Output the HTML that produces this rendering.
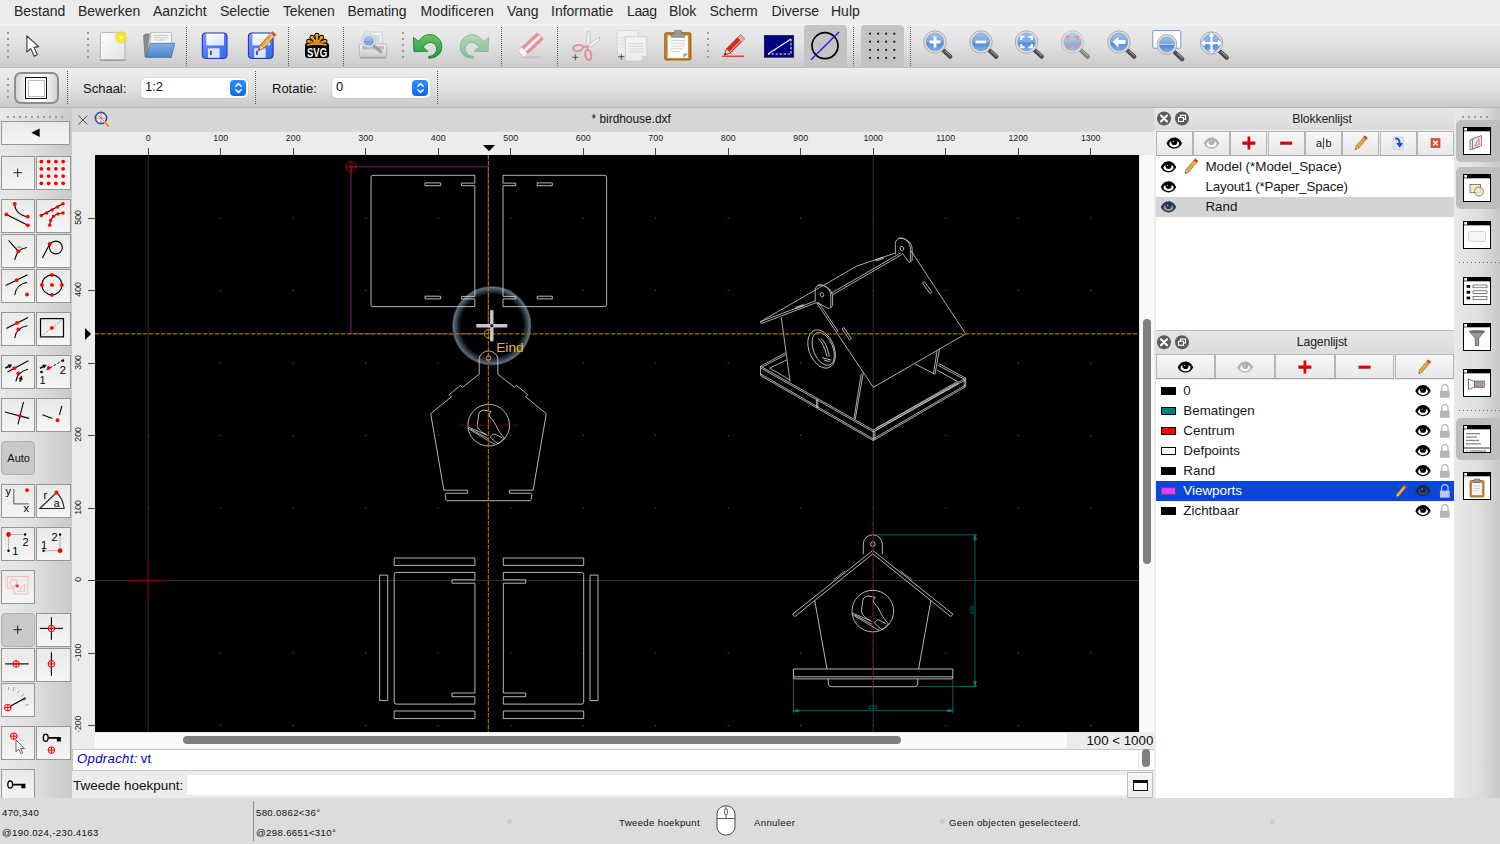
<!DOCTYPE html>
<html lang="nl"><head><meta charset="utf-8"><title>* birdhouse.dxf</title>
<style>
*{box-sizing:border-box;margin:0;padding:0}
html,body{width:1500px;height:844px;overflow:hidden;background:#ececec;font-family:"Liberation Sans",sans-serif;color:#1c1c1c}
.a{position:absolute}
.t{position:absolute;white-space:nowrap;line-height:1}
#menubar{left:0;top:0;width:1500px;height:24px;background:#ececec}
#menubar span{position:absolute;top:3px;font-size:14px;line-height:16px;color:#262626;white-space:nowrap}
#tb1{left:0;top:24px;width:1500px;height:44px;background:linear-gradient(#ededed,#e3e3e3 40%,#cdcdcd 96%,#c8c8c8);border-top:1px solid #f4f4f4;border-bottom:1px solid #bebebe}
#tb2{left:0;top:68px;width:1500px;height:40px;background:linear-gradient(#ededed,#e3e3e3 45%,#cdcdcd 94%,#c6c6c6);border-bottom:1px solid #b9b9b9}
.hdl{position:absolute;width:2px;background:repeating-linear-gradient(#9c9c9c 0 2px,transparent 2px 6px)}
.sep{position:absolute;width:1px;background:repeating-linear-gradient(#5a5a5a 0 1px,transparent 1px 2px)}
.chk{position:absolute;background:#c4c4c4;border-radius:4px}
.ico{position:absolute;width:32px;height:32px;overflow:visible}
#left{left:0;top:108px;width:72px;height:690px;background:linear-gradient(90deg,#e9e9e9,#dedede 50%,#c9c9c9)}
.lb{position:absolute;width:34.300px;height:34.200px;background:linear-gradient(#e9e9e9,#f5f5f5);border:1px solid #969696}
.lb svg{position:absolute;left:-1px;top:-1px;width:34px;height:34px;overflow:visible}
#tabbar{left:72px;top:108px;width:1082px;height:23.600px;background:#d6d6d6}
#hruler{left:72px;top:131px;width:1082px;height:24px;background:linear-gradient(#dbdbdb 0,#dbdbdb 1px,#ececec 1px)}
#vruler{left:72px;top:155px;width:23px;height:577px;background:#ececec;overflow:hidden}
#canvas{left:95px;top:155px;width:1044px;height:577px;background:#000;overflow:hidden}
.rl{position:absolute;font-size:8.8px;color:#1a1a1a;line-height:1;white-space:nowrap}
#status{left:0;top:798px;width:1500px;height:46px;background:#dcdcdc}
#status .t{font-size:9.6px;color:#111;letter-spacing:.35px}
#right{left:1154px;top:108px;width:300px;height:690px;background:#ececec}
#ricons{left:1454px;top:108px;width:46px;height:690px;background:linear-gradient(90deg,#e9e9e9,#dedede 55%,#c8c8c8)}
.dockt{position:absolute;left:0;width:300px;height:22px;background:linear-gradient(#e6e6e6,#dcdcdc);font-size:12.2px;letter-spacing:-.12px;text-align:center;line-height:22px;color:#222}
.dbtn{position:absolute;height:24px;background:linear-gradient(#f7f7f7,#e8e8e8);border:1px solid #b5b5b5;border-bottom-color:#a5a5a5}
.dbtn svg{position:absolute;left:50%;top:50%;overflow:visible}
.list{position:absolute;left:2px;width:298.500px;background:#fff}
.row{position:absolute;left:0;width:298.500px;height:20px;font-size:13.4px;line-height:20px;color:#161616;white-space:nowrap}
.row .nm{position:absolute;top:0}
.sw{position:absolute;left:5px;top:6px;width:15px;height:8px;border:1px solid #000}
</style></head><body>
<div id="menubar" class="a">
<span style="left:14px">Bestand</span><span style="left:78px">Bewerken</span><span style="left:153px">Aanzicht</span><span style="left:220px">Selectie</span><span style="left:283px;letter-spacing:-.2px">Tekenen</span><span style="left:347.5px">Bemating</span><span style="left:420.5px;letter-spacing:.1px">Modificeren</span><span style="left:507px">Vang</span><span style="left:551px">Informatie</span><span style="left:627px;letter-spacing:-.4px">Laag</span><span style="left:669px">Blok</span><span style="left:709.5px">Scherm</span><span style="left:771.5px">Diverse</span><span style="left:831px">Hulp</span>
</div>
<div id="tb1" class="a">
<i class="hdl" style="left:7px;top:7px;height:26px"></i>
<i class="hdl" style="left:87px;top:7px;height:26px"></i>
<i class="sep" style="left:186px;top:2px;height:40px"></i>
<i class="sep" style="left:288px;top:2px;height:40px"></i>
<i class="sep" style="left:343px;top:2px;height:40px"></i>
<i class="hdl" style="left:402px;top:7px;height:26px"></i>
<i class="sep" style="left:501px;top:2px;height:40px"></i>
<i class="sep" style="left:557px;top:2px;height:40px"></i>
<i class="hdl" style="left:707px;top:7px;height:26px"></i>
<i class="sep" style="left:853px;top:2px;height:40px"></i>
<i class="sep" style="left:910px;top:2px;height:40px"></i>
<div class="chk" style="left:804px;top:0px;width:43px;height:43px"></div>
<div class="chk" style="left:861px;top:0px;width:43px;height:43px"></div>
<svg class="a" style="left:0;top:-1px;pointer-events:none" width="1500" height="44" viewBox="0 24 1500 44">
<defs>
<radialGradient id="glow"><stop offset="0" stop-color="#fffff0"/><stop offset=".35" stop-color="#f4ec2a"/><stop offset=".75" stop-color="#efe01a" stop-opacity=".75"/><stop offset="1" stop-color="#efe01a" stop-opacity="0"/></radialGradient>
<linearGradient id="pg" x1="0" y1="0" x2="1" y2="1"><stop offset="0" stop-color="#fdfdfd"/><stop offset="1" stop-color="#e4e4e4"/></linearGradient>
<linearGradient id="fold" x1="0" y1="0" x2="0" y2="1"><stop offset="0" stop-color="#7fb0e4"/><stop offset="1" stop-color="#4d86c6"/></linearGradient>
<linearGradient id="flop" x1="0" y1="0" x2="1" y2="1"><stop offset="0" stop-color="#7a9cff"/><stop offset=".5" stop-color="#4a7dff"/><stop offset="1" stop-color="#2f6df2"/></linearGradient>
<linearGradient id="lab" x1="0" y1="0" x2="1" y2="1"><stop offset="0" stop-color="#ffffff"/><stop offset="1" stop-color="#d7e0fa"/></linearGradient>
<linearGradient id="grn" x1="0" y1="0" x2="0" y2="1"><stop offset="0" stop-color="#6cc46a"/><stop offset="1" stop-color="#1f9a3a"/></linearGradient>
<linearGradient id="lens" x1="0" y1="0" x2="0" y2="1"><stop offset="0" stop-color="#9cc0ee"/><stop offset=".52" stop-color="#74a6e4"/><stop offset=".54" stop-color="#4c86d6"/><stop offset="1" stop-color="#7fb0ea"/></linearGradient>
<linearGradient id="pr" x1="0" y1="0" x2="0" y2="1"><stop offset="0" stop-color="#f4f4f4"/><stop offset="1" stop-color="#c9c9c9"/></linearGradient>
</defs>
<path d="M26.900 35.800V52L30.800 48.600L34.200 56.200L37.300 54.800L34 47.400L38.600 46.600Z" fill="#fff" stroke="#3a3a3a" stroke-width="1.100" stroke-linejoin="round"/>
<rect x="100" y="59" width="25.500" height="2" rx="1" fill="#000" opacity=".25"/>
<rect x="100.400" y="32.600" width="24.600" height="27" rx="1.200" fill="url(#pg)" stroke="#a8a8a8" stroke-width=".8"/>
<circle cx="121" cy="37.400" r="7" fill="url(#glow)"/>
<path d="M102.600 42.500h.8M102.600 50h.8" stroke="#bbb" stroke-width=".8"/>
<path d="M143.500 35.500l2 -1.500h5l1.500 1.500h18.500v21.500h-25.500Z" fill="#8a8a8a" stroke="#666" stroke-width=".6"/>
<path d="M149.500 33.500h21.800v20h-23.500Z" fill="#dcdcdc" stroke="#999" stroke-width=".5"/><path d="M151 32.600h20.500v20h-22.500Z" fill="#f6f6f6" stroke="#999" stroke-width=".5"/><path d="M153.500 35.500h15M153.500 37.800h15M153.500 40h12" stroke="#bbb" stroke-width=".8"/>
<path d="M150.700 43.300H174.700L171.300 57.400H146Z" fill="url(#fold)" stroke="#3d6fa8" stroke-width=".7" stroke-linejoin="round"/>
<rect x="202.3" y="33" width="24.700" height="25.400" rx="3" fill="url(#flop)" stroke="#2626a8" stroke-width="1"/><rect x="206.3" y="33.600" width="17.700" height="11.800" fill="url(#lab)"/><rect x="208.0" y="48.300" width="11.600" height="9.500" fill="#dfe3ee"/><rect x="210.0" y="50.800" width="1.700" height="4.200" fill="#1f3fd0"/>
<rect x="248.4" y="33" width="24.700" height="25.400" rx="3" fill="url(#flop)" stroke="#2626a8" stroke-width="1"/><rect x="252.4" y="33.600" width="17.700" height="11.800" fill="url(#lab)"/><rect x="254.1" y="48.300" width="11.600" height="9.500" fill="#dfe3ee"/><rect x="256.1" y="50.800" width="1.700" height="4.200" fill="#1f3fd0"/>
<g transform="translate(274.2,33.2) rotate(132.3)"><path d="M0 -2.3H17.644449665830653L23.644449665830653 0L17.644449665830653 2.3H0Z" fill="#f4a21c" stroke="#a85a00" stroke-width=".7" stroke-linejoin="round"/><path d="M17.644449665830653 -2.3L23.644449665830653 0L17.644449665830653 2.3Z" fill="#f1d7a8" stroke="#a85a00" stroke-width=".5"/><path d="M21.444449665830653 -0.8363636363636363L23.644449665830653 0L21.444449665830653 0.8363636363636363Z" fill="#222"/><path d="M1 -1.0999999999999999H17.144449665830653" stroke="#fff" stroke-opacity=".55" stroke-width="1.100"/><rect x="0" y="-2.3" width="2.600" height="4.6" fill="#e0523a"/><rect x="2.600" y="-2.3" width="1.200" height="4.6" fill="#ddd"/></g>
<g stroke-linecap="round"><path d="M316.8 44L308.7 41.3" stroke="#000" stroke-width="3.800"/><path d="M316.8 44L312 37.3" stroke="#000" stroke-width="3.800"/><path d="M316.8 44L316.8 35.3" stroke="#000" stroke-width="3.800"/><path d="M316.8 44L321.6 37.3" stroke="#000" stroke-width="3.800"/><path d="M316.8 44L324.9 41.3" stroke="#000" stroke-width="3.800"/><circle cx="308.7" cy="41.3" r="2.500" fill="#000"/><circle cx="312" cy="37.3" r="2.500" fill="#000"/><circle cx="316.8" cy="35.3" r="2.500" fill="#000"/><circle cx="321.6" cy="37.3" r="2.500" fill="#000"/><circle cx="324.9" cy="41.3" r="2.500" fill="#000"/><path d="M316.8 44L308.7 41.3" stroke="#f7a41d" stroke-width="2"/><circle cx="308.7" cy="41.3" r="1.600" fill="#f7a41d"/><path d="M316.8 44L312 37.3" stroke="#f7a41d" stroke-width="2"/><circle cx="312" cy="37.3" r="1.600" fill="#f7a41d"/><path d="M316.8 44L316.8 35.3" stroke="#f7a41d" stroke-width="2"/><circle cx="316.8" cy="35.3" r="1.600" fill="#f7a41d"/><path d="M316.8 44L321.6 37.3" stroke="#f7a41d" stroke-width="2"/><circle cx="321.6" cy="37.3" r="1.600" fill="#f7a41d"/><path d="M316.8 44L324.9 41.3" stroke="#f7a41d" stroke-width="2"/><circle cx="324.9" cy="41.3" r="1.600" fill="#f7a41d"/></g>
<rect x="305" y="42.800" width="24" height="15.300" rx="3" fill="#000"/><path d="M307 45Q316.800 42.800 326.600 45" stroke="#f7a41d" stroke-width="1.700" fill="none"/>
<text x="317" y="56.700" font-size="12.800" font-weight="bold" fill="#fff" text-anchor="middle" textLength="20" lengthAdjust="spacingAndGlyphs" font-family="Liberation Sans,sans-serif">SVG</text>
<rect x="364" y="32" width="18" height="14" fill="#f2f2f2" stroke="#bdbdbd" stroke-width=".6"/><rect x="372" y="35" width="8" height="8" fill="#dcdcdc"/>
<rect x="359.300" y="44" width="27.400" height="13.300" rx="2" fill="url(#pr)" stroke="#a9a9a9" stroke-width=".7"/><rect x="362" y="46" width="22" height="3.500" fill="#8f8f8f" opacity=".5"/><rect x="360" y="57.300" width="26" height="1.500" rx=".7" fill="#000" opacity=".2"/>
<path d="M372.500 44.800L380.700 51.600" stroke="#9a9a9a" stroke-width="3" stroke-linecap="round"/><circle cx="368.700" cy="40.700" r="6" fill="url(#lens)" fill-opacity=".8" stroke="#e9e9e9" stroke-width="1.600"/><circle cx="368.700" cy="40.700" r="6.900" fill="none" stroke="#a4a4a4" stroke-width=".5"/>
<g transform="translate(427.8,0)" opacity="1"><path d="M-14.400 37.400L-13.800 51.600L0 51.200L-4.600 47.600C-3 43.500 1.500 41.600 5 43C9 44.800 10 49.500 7.500 53C5.800 55.200 3.500 56.200 0.800 56.400L1 58.200C6 58.200 10.500 56.200 12.800 52C15.500 46.500 13.500 39.500 8 36.200C2 32.800 -5.500 35 -9 41.500Z" fill="url(#grn)" stroke="#14802c" stroke-width=".9" stroke-linejoin="round"/></g>
<g transform="translate(474.2,0) scale(-1,1)" opacity="0.42"><path d="M-14.400 37.400L-13.800 51.600L0 51.200L-4.600 47.600C-3 43.500 1.500 41.600 5 43C9 44.800 10 49.500 7.500 53C5.800 55.200 3.500 56.200 0.800 56.400L1 58.200C6 58.200 10.500 56.200 12.800 52C15.500 46.500 13.500 39.500 8 36.200C2 32.800 -5.500 35 -9 41.500Z" fill="url(#grn)" stroke="#14802c" stroke-width=".9" stroke-linejoin="round"/></g>
<ellipse cx="531.500" cy="57.300" rx="11" ry="1.500" fill="#000" opacity=".07"/>
<g transform="translate(521,54) rotate(-43)" opacity=".85"><rect x="0" y="-4.500" width="26.400" height="9" rx="1" fill="#e3868c" stroke="#d1757b" stroke-width=".5"/><rect x="0" y="-4.500" width="5" height="9" fill="#fbfbfb" stroke="#ccc" stroke-width=".4"/><rect x="5" y="-1.500" width="21" height="3" fill="#fbeff0"/></g>
<g opacity=".85"><path d="M586 46L587.300 31.500L589.800 31L590.200 45.500Z" fill="#f4f4f4" stroke="#a4a4a4" stroke-width=".6"/><path d="M588.500 44.500L599.400 37.200L599.800 40.200L589.800 47.500Z" fill="#f4f4f4" stroke="#a4a4a4" stroke-width=".6"/>
<ellipse cx="578" cy="48" rx="5" ry="3" transform="rotate(-12 578 48)" fill="none" stroke="#e3838a" stroke-width="2"/><ellipse cx="588.300" cy="55" rx="3" ry="5" transform="rotate(-10 588.300 55)" fill="none" stroke="#e3838a" stroke-width="2"/><path d="M582.500 47L587.500 46.500L587.800 50.500" fill="none" stroke="#e3838a" stroke-width="2"/></g>
<path d="M572.300 57.300h6M575.300 54.300v6" stroke="#444" stroke-width=".9"/>
<g opacity=".75"><rect x="617.300" y="30.400" width="20.700" height="25.600" rx="1" fill="#f3f3f3" stroke="#c4c4c4" stroke-width=".7"/><path d="M620.500 38h6M620.500 41h6M620.500 44h6M620.500 47h6" stroke="#ccc" stroke-width=".7"/><path d="M625.300 36.700H646.700V56.500L642 61H625.300Z" fill="#f6f6f6" stroke="#bdbdbd" stroke-width=".7"/><path d="M642 61V56.500H646.700Z" fill="#ddd" stroke="#bdbdbd" stroke-width=".5"/><path d="M629.500 43.500h13.500M629.500 46.200h13.500M629.500 49h13.500M629.500 51.800h13.500" stroke="#ccc" stroke-width=".8"/></g>
<path d="M618.300 56.700h6M621.300 53.700v6" stroke="#444" stroke-width=".9"/>
<rect x="664.700" y="32.700" width="26.300" height="27.300" rx="1.500" fill="#c47d1c" stroke="#8e570e" stroke-width=".8"/><rect x="667.800" y="35.600" width="20.200" height="22.400" fill="#fbfbfb" stroke="#d3d3d3" stroke-width=".4"/><path d="M683.500 58V53.500H688Z" fill="#9d9d9d"/><path d="M671 40.500h14M671 43.200h14M671 46h14M671 48.800h12M671 51.500h9" stroke="#c9c9c9" stroke-width=".8"/><path d="M671.300 37.300V33.500H674.500V30.400H681.500V33.500H684.700V37.300Z" fill="#9b9b8e" stroke="#6d6d63" stroke-width=".6"/>
<g transform="translate(742.5,36.8) rotate(134.8)"><path d="M0 -2.8H19.668073554515168L25.668073554515168 0L19.668073554515168 2.8H0Z" fill="#dc2a1e" stroke="#7e1208" stroke-width=".7" stroke-linejoin="round"/><path d="M19.668073554515168 -2.8L25.668073554515168 0L19.668073554515168 2.8Z" fill="#f1d7a8" stroke="#7e1208" stroke-width=".5"/><path d="M23.46807355451517 -1.018181818181818L25.668073554515168 0L23.46807355451517 1.018181818181818Z" fill="#222"/><path d="M1 -1.5999999999999999H19.168073554515168" stroke="#fff" stroke-opacity=".55" stroke-width="1.100"/><rect x="0" y="-2.8" width="2.600" height="5.6" fill="#f0b0a8"/><rect x="2.600" y="-2.8" width="1.200" height="5.6" fill="#ddd"/></g>
<path d="M722 56.200H744" stroke="#f00" stroke-width="1.100"/>
<rect x="764.400" y="35.600" width="29.200" height="21.600" fill="#000082" stroke="#1b1b4a" stroke-width=".9"/><path d="M768 54L791 39" stroke="#fff" stroke-width="1.100"/><path d="M791 39V54H768" stroke="#e8e8ff" stroke-width="1.100" stroke-dasharray="2.400 1.600" fill="none"/>
<circle cx="825" cy="45.700" r="13" fill="none" stroke="#000" stroke-width="1.700"/><path d="M811 59.700L839 32" stroke="#1414f0" stroke-width="1.200"/>
<path d="M869.2 33.6h1.700M869.2 41.7h1.700M869.2 49.8h1.700M869.2 57.9h1.700M877.3 33.6h1.700M877.3 41.7h1.700M877.3 49.8h1.700M877.3 57.9h1.700M885.4 33.6h1.700M885.4 41.7h1.700M885.4 49.8h1.700M885.4 57.9h1.700M893.5 33.6h1.700M893.5 41.7h1.700M893.5 49.8h1.700M893.5 57.9h1.700" stroke="#000" stroke-width="1.700"/>
<g opacity="1"><path d="M943 50L950.2 56.6" stroke="#4c4c4c" stroke-width="4.400" stroke-linecap="round"/><path d="M944.8 50.6L950.8 56" stroke="#b4b4b4" stroke-width="1"/><circle cx="935" cy="42" r="11.2" fill="#e2e2e2" stroke="#9a9a9a" stroke-width=".8"/><circle cx="935" cy="42" r="8.9" fill="url(#lens)" stroke="#5f8fcf" stroke-width=".5"/><path d="M929.500 42H940.500M935 36.500V47.500" stroke="#fff" stroke-width="2.800"/></g>
<g opacity="1"><path d="M989 50L996.2 56.6" stroke="#4c4c4c" stroke-width="4.400" stroke-linecap="round"/><path d="M990.8 50.6L996.8 56" stroke="#b4b4b4" stroke-width="1"/><circle cx="981" cy="42" r="11.2" fill="#e2e2e2" stroke="#9a9a9a" stroke-width=".8"/><circle cx="981" cy="42" r="8.9" fill="url(#lens)" stroke="#5f8fcf" stroke-width=".5"/><path d="M975.500 42H986.500" stroke="#fff" stroke-width="2.800"/></g>
<g opacity="1"><path d="M1034.5 50L1041.7 56.6" stroke="#4c4c4c" stroke-width="4.400" stroke-linecap="round"/><path d="M1036.3 50.6L1042.3 56" stroke="#b4b4b4" stroke-width="1"/><circle cx="1026.5" cy="42" r="11.2" fill="#e2e2e2" stroke="#9a9a9a" stroke-width=".8"/><circle cx="1026.5" cy="42" r="8.9" fill="url(#lens)" stroke="#5f8fcf" stroke-width=".5"/><path d="M1021.2 40.0V36.7H1024.5M1028.5 36.7H1031.8V40.0M1031.8 44.0V47.3H1028.5M1024.5 47.3H1021.2V44.0" fill="none" stroke="#fff" stroke-width="2.100"/></g>
<g opacity="0.6"><path d="M1080.5 50L1087.7 56.6" stroke="#4c4c4c" stroke-width="4.400" stroke-linecap="round"/><path d="M1082.3 50.6L1088.3 56" stroke="#b4b4b4" stroke-width="1"/><circle cx="1072.5" cy="42" r="11.2" fill="#e2e2e2" stroke="#9a9a9a" stroke-width=".8"/><circle cx="1072.5" cy="42" r="8.9" fill="url(#lens)" stroke="#5f8fcf" stroke-width=".5"/><path d="M1067.2 40.0V36.7H1070.5M1074.5 36.7H1077.8V40.0M1077.8 44.0V47.3H1074.5M1070.5 47.3H1067.2V44.0" fill="none" stroke="#f25a5a" stroke-width="2.100"/></g>
<g opacity="1"><path d="M1127 50L1134.2 56.6" stroke="#4c4c4c" stroke-width="4.400" stroke-linecap="round"/><path d="M1128.8 50.6L1134.8 56" stroke="#b4b4b4" stroke-width="1"/><circle cx="1119" cy="42" r="11.2" fill="#e2e2e2" stroke="#9a9a9a" stroke-width=".8"/><circle cx="1119" cy="42" r="8.9" fill="url(#lens)" stroke="#5f8fcf" stroke-width=".5"/><path d="M1112.500 42L1118.500 36.500V40H1125.500V44H1118.500V47.500Z" fill="#fff"/></g>
<rect x="1152.800" y="30.600" width="28" height="17.600" rx="1" fill="#fff" stroke="#5b8fe0" stroke-width=".9"/>
<g opacity="1"><path d="M1175 52.5L1182.2 59.1" stroke="#4c4c4c" stroke-width="4.400" stroke-linecap="round"/><path d="M1176.8 53.1L1182.8 58.5" stroke="#b4b4b4" stroke-width="1"/><circle cx="1167" cy="44.5" r="9.899999999999999" fill="#e2e2e2" stroke="#9a9a9a" stroke-width=".8"/><circle cx="1167" cy="44.5" r="7.6" fill="url(#lens)" stroke="#5f8fcf" stroke-width=".5"/><path d="M1159.500 44.500H1174.500" stroke="#fff" stroke-opacity=".5" stroke-width="1"/></g>
<g opacity="1"><path d="M1219.5 51L1226.7 57.6" stroke="#4c4c4c" stroke-width="4.400" stroke-linecap="round"/><path d="M1221.3 51.6L1227.3 57" stroke="#b4b4b4" stroke-width="1"/><circle cx="1211.5" cy="43" r="11.2" fill="#e2e2e2" stroke="#9a9a9a" stroke-width=".8"/><circle cx="1211.5" cy="43" r="8.9" fill="url(#lens)" stroke="#5f8fcf" stroke-width=".5"/><path d="M1211.500 32.500l3.200 4h-2v4h4v-2l4 3.200l-4 3.200v-2h-4v4h2l-3.200 4l-3.200 -4h2v-4h-4v2l-4 -3.200l4 -3.200v2h4v-4h-2Z" fill="#fff" stroke="#5b8fe0" stroke-width=".5" transform="translate(1211.500,43) scale(1.220) translate(-1211.500,-41.700)"/></g>
</svg>
</div>
<div id="tb2" class="a">
<i class="hdl" style="left:7px;top:9.500px;height:20px"></i>
<i class="sep" style="left:67px;top:3px;height:34px"></i>
<i class="sep" style="left:255px;top:3px;height:34px"></i>
<i class="sep" style="left:437px;top:3px;height:34px"></i>
<div class="a" style="left:14px;top:4px;width:45px;height:32px;border:2px solid #8e8e8e;border-radius:7px;background:linear-gradient(90deg,#d4d4d4,#f8f8f8 30%,#fbfbfb 50%,#f8f8f8 70%,#d4d4d4)"></div>
<div class="a" style="left:25px;top:9px;width:22px;height:22px;border:1px solid #111;background:#fff"></div>
<div class="a" style="left:27.5px;top:11.5px;width:17px;height:17px;border:1px solid #bbb;background:#fff"></div>
<span class="t" style="left:83px;top:14px;font-size:13px;color:#111">Schaal:</span>
<div class="a" style="left:141px;top:10px;width:107px;height:20px;background:#fff;border-radius:5px;box-shadow:0 0 0 .5px #cfcfcf,0 1px 1px rgba(0,0,0,.12)"><span class="t" style="left:4px;top:2px;font-size:13px;color:#111">1:2</span>
<div class="a" style="right:1.800px;top:2px;width:16px;height:16px;border-radius:4px;background:linear-gradient(#2f8bff,#0a6bf2)"><svg width="15" height="16" viewBox="0 0 15 16" style="position:absolute;left:.5px;top:0"><path d="M4.8 6.3 7.5 3.6l2.7 2.7M4.8 9.7l2.7 2.7 2.7-2.7" fill="none" stroke="#fff" stroke-width="1.5" stroke-linecap="round" stroke-linejoin="round"/></svg></div></div>
<span class="t" style="left:272px;top:14px;font-size:13px;color:#111">Rotatie:</span>
<div class="a" style="left:332px;top:10px;width:98px;height:20px;background:#fff;border-radius:5px;box-shadow:0 0 0 .5px #cfcfcf,0 1px 1px rgba(0,0,0,.12)"><span class="t" style="left:4px;top:2px;font-size:13px;color:#111">0</span>
<div class="a" style="right:1.800px;top:2px;width:16px;height:16px;border-radius:4px;background:linear-gradient(#2f8bff,#0a6bf2)"><svg width="15" height="16" viewBox="0 0 15 16" style="position:absolute;left:.5px;top:0"><path d="M4.8 6.3 7.5 3.6l2.7 2.7M4.8 9.7l2.7 2.7 2.7-2.7" fill="none" stroke="#fff" stroke-width="1.5" stroke-linecap="round" stroke-linejoin="round"/></svg></div></div>
</div>
<div id="left" class="a">
<i class="a" style="left:7px;top:8px;width:56px;height:2px;background:repeating-linear-gradient(90deg,#9c9c9c 0 2px,transparent 2px 6px)"></i>
<div class="lb" style="left:1.4px;top:12.6px;width:69px;height:24.4px"><svg viewBox="0 0 69 24" style="width:69px;height:24px"><path d="M38.6 7.6V16L30.4 11.8Z" fill="#000"/></svg></div>
<div class="lb" style="left:1.2px;top:48px"><svg viewBox="0.5 0.5 34 34"><line x1="13" y1="17.2" x2="21.4" y2="17.2" stroke="#111" stroke-width="0.9" /><line x1="17.2" y1="13" x2="17.2" y2="21.4" stroke="#111" stroke-width="0.9" /></svg></div>
<div class="lb" style="left:36.3px;top:48px"><svg viewBox="0.5 0.5 34 34"><circle cx="5.9" cy="6.1" r="1.9" fill="#f00"/><circle cx="5.9" cy="13.35" r="1.9" fill="#f00"/><circle cx="5.9" cy="20.6" r="1.9" fill="#f00"/><circle cx="5.9" cy="27.85" r="1.9" fill="#f00"/><circle cx="13.15" cy="6.1" r="1.9" fill="#f00"/><circle cx="13.15" cy="13.35" r="1.9" fill="#f00"/><circle cx="13.15" cy="20.6" r="1.9" fill="#f00"/><circle cx="13.15" cy="27.85" r="1.9" fill="#f00"/><circle cx="20.4" cy="6.1" r="1.9" fill="#f00"/><circle cx="20.4" cy="13.35" r="1.9" fill="#f00"/><circle cx="20.4" cy="20.6" r="1.9" fill="#f00"/><circle cx="20.4" cy="27.85" r="1.9" fill="#f00"/><circle cx="27.65" cy="6.1" r="1.9" fill="#f00"/><circle cx="27.65" cy="13.35" r="1.9" fill="#f00"/><circle cx="27.65" cy="20.6" r="1.9" fill="#f00"/><circle cx="27.65" cy="27.85" r="1.9" fill="#f00"/></svg></div>
<div class="lb" style="left:1.2px;top:91.2px"><svg viewBox="0.5 0.5 34 34"><line x1="5.9" y1="15.9" x2="27.3" y2="26.8" stroke="#000" stroke-width="1.1" /><path d="M14.2 5.5C14.5 12.5 19.5 17.5 27.3 18.2" stroke="#000" stroke-width="1.1" fill="none" /><circle cx="14.2" cy="5.5" r="1.9" fill="#f00"/><circle cx="5.9" cy="15.9" r="1.9" fill="#f00"/><circle cx="27.3" cy="18.2" r="1.9" fill="#f00"/><circle cx="27.3" cy="26.8" r="1.9" fill="#f00"/></svg></div>
<div class="lb" style="left:36.3px;top:91.2px"><svg viewBox="0.5 0.5 34 34"><path d="M5.7 17L27.5 5.2" stroke="#000" stroke-width="1.1" fill="none" /><path d="M14.2 26.8C14.8 19.5 19.5 15 27.5 14.5" stroke="#000" stroke-width="1.1" fill="none" /><circle cx="5.7" cy="17" r="1.7" fill="#f00"/><circle cx="11.1" cy="14.5" r="1.7" fill="#f00"/><circle cx="16.6" cy="11.4" r="1.7" fill="#f00"/><circle cx="22" cy="8.5" r="1.7" fill="#f00"/><circle cx="27.5" cy="5.2" r="1.7" fill="#f00"/><circle cx="14.2" cy="26.8" r="1.7" fill="#f00"/><circle cx="15.2" cy="21.8" r="1.7" fill="#f00"/><circle cx="18" cy="17.8" r="1.7" fill="#f00"/><circle cx="22.5" cy="15.4" r="1.7" fill="#f00"/><circle cx="27.5" cy="14.5" r="1.7" fill="#f00"/></svg></div>
<div class="lb" style="left:1.2px;top:126.2px"><svg viewBox="0.5 0.5 34 34"><path d="M8.1 6.9L17.8 17.8M17.8 17.8C16.5 20 15 23 14.2 26.5M17.8 17.8C20.5 15.5 23.5 14.5 26.5 14" stroke="#000" stroke-width="1.1" fill="none" /><path d="M15.8 14.8C17.5 12.6 20.8 12.8 21.6 15.4" stroke="#555" stroke-width="0.7" fill="none" /><circle cx="17.8" cy="17.8" r="1.9" fill="#f00"/><circle cx="18.6" cy="14.6" r="0.5" fill="#333"/></svg></div>
<div class="lb" style="left:36.3px;top:126.2px"><svg viewBox="0.5 0.5 34 34"><circle cx="20.4" cy="14" r="6.4" fill="none" stroke="#000" stroke-width="1.1"/><line x1="6.9" y1="24.6" x2="14.2" y2="10.4" stroke="#000" stroke-width="1.1" /><circle cx="14.2" cy="10.4" r="1.9" fill="#f00"/></svg></div>
<div class="lb" style="left:1.2px;top:161.2px"><svg viewBox="0.5 0.5 34 34"><line x1="5.2" y1="17" x2="27" y2="6.2" stroke="#000" stroke-width="1.1" /><path d="M14.2 26.5C15 20 19.5 15 26.5 14" stroke="#000" stroke-width="1.1" fill="none" /><circle cx="16.1" cy="11.6" r="1.9" fill="#f00"/><circle cx="26.5" cy="26" r="1.9" fill="#f00"/></svg></div>
<div class="lb" style="left:36.3px;top:161.2px"><svg viewBox="0.5 0.5 34 34"><circle cx="16.4" cy="16.4" r="10" fill="none" stroke="#000" stroke-width="1.1"/><circle cx="16.4" cy="16.4" r="1.9" fill="#f00"/><circle cx="6.4" cy="16.4" r="1.9" fill="#f00"/><circle cx="26.4" cy="16.4" r="1.9" fill="#f00"/><circle cx="16.4" cy="6.4" r="1.9" fill="#f00"/><circle cx="16.4" cy="26.4" r="1.9" fill="#f00"/></svg></div>
<div class="lb" style="left:1.2px;top:204.2px"><svg viewBox="0.5 0.5 34 34"><line x1="5.7" y1="17" x2="27.5" y2="5.9" stroke="#000" stroke-width="1.1" /><path d="M14.2 26.5C15 20 19.5 15.2 27 14.2" stroke="#000" stroke-width="1.1" fill="none" /><circle cx="16.6" cy="11.4" r="1.9" fill="#f00"/><circle cx="18" cy="17.8" r="1.9" fill="#f00"/></svg></div>
<div class="lb" style="left:36.3px;top:204.2px"><svg viewBox="0.5 0.5 34 34"><rect x="5" y="7.1" width="23" height="18.3" fill="none" stroke="#000" stroke-width="1.2"/><line x1="5" y1="25.4" x2="28" y2="7.1" stroke="#777" stroke-width="0.8" stroke-dasharray="2 1.5"/><circle cx="16.4" cy="16.4" r="1.9" fill="#f00"/></svg></div>
<div class="lb" style="left:1.2px;top:247.1px"><svg viewBox="0.5 0.5 34 34"><line x1="7" y1="17.5" x2="27.8" y2="6.3" stroke="#000" stroke-width="1.1" /><path d="M15.4 26.9C16 21 20.500 16 27.600 14.700" stroke="#000" stroke-width="1.1" fill="none" /><circle cx="13.9" cy="13.7" r="1.9" fill="#f00"/><circle cx="17.8" cy="19" r="1.9" fill="#f00"/><path d="M5.0 13.5L8.0 12.0" stroke="#000" stroke-width="1.7"/><path d="M11.8 10.1L9.0 13.9L7.1 10.0Z" fill="#000"/><path d="M19.4 27.1L20.1 25.1" stroke="#000" stroke-width="1.7"/><path d="M21.4 21.1L22.2 25.8L18.0 24.4Z" fill="#000"/></svg></div>
<div class="lb" style="left:36.3px;top:247.1px"><svg viewBox="0.5 0.5 34 34"><line x1="11" y1="15.4" x2="27.4" y2="5.8" stroke="#000" stroke-width="1" stroke-dasharray="2.4 1.8"/><circle cx="13.2" cy="13.5" r="1.9" fill="#f00"/><circle cx="27.4" cy="6" r="1.3" fill="#000"/><circle cx="6" cy="17.5" r="1.3" fill="#000"/><path d="M4.5 13.7L7.5 12.2" stroke="#000" stroke-width="1.7"/><path d="M11.3 10.3L8.5 14.1L6.6 10.2Z" fill="#000"/><text x="4" y="29.5" font-size="11" fill="#000" font-family="Liberation Sans,sans-serif">1</text><text x="24.2" y="19.2" font-size="11" fill="#000" font-family="Liberation Sans,sans-serif">2</text></svg></div>
<div class="lb" style="left:1.2px;top:290.1px"><svg viewBox="0.5 0.5 34 34"><line x1="4.5" y1="14.5" x2="28.7" y2="20.9" stroke="#000" stroke-width="1.1" /><line x1="23" y1="4.3" x2="17.5" y2="26.8" stroke="#000" stroke-width="1.1" /><circle cx="19.4" cy="18.5" r="1.9" fill="#f00"/></svg></div>
<div class="lb" style="left:36.3px;top:290.1px"><svg viewBox="0.5 0.5 34 34"><line x1="6.9" y1="17.3" x2="16.8" y2="20.9" stroke="#000" stroke-width="1.1" /><line x1="26.3" y1="8.3" x2="24" y2="17.3" stroke="#000" stroke-width="1.1" /><circle cx="22" cy="22.7" r="1.9" fill="#f00"/></svg></div>
<div class="lb" style="left:1.2px;top:333.1px;background:#c9c9c9;border-radius:4px;border-color:#b0b0b0"><span class="t" style="left:0;width:33px;text-align:center;top:11px;font-size:11px;color:#111">Auto</span></div>
<div class="lb" style="left:1.2px;top:376.1px"><svg viewBox="0.5 0.5 34 34"><path d="M13.3 5.5V20.4H28.2" stroke="#555" stroke-width="1" fill="none" /><text x="5" y="11.5" font-size="11" fill="#000" font-family="Liberation Sans,sans-serif">y</text><text x="23" y="28" font-size="11" fill="#000" font-family="Liberation Sans,sans-serif">x</text><circle cx="26.5" cy="6.6" r="1.9" fill="#f00"/></svg></div>
<div class="lb" style="left:36.3px;top:376.1px"><svg viewBox="0.5 0.5 34 34"><path d="M4.3 25L21 9C25.5 13 27.8 18.5 28.7 25Z" stroke="#222" stroke-width="1.1" fill="none" /><text x="8" y="15.5" font-size="11" fill="#000" font-family="Liberation Sans,sans-serif">r</text><text x="18.2" y="23" font-size="10.5" fill="#000" font-family="Liberation Sans,sans-serif">a</text><circle cx="21" cy="9" r="1.9" fill="#f00"/></svg></div>
<div class="lb" style="left:1.2px;top:419.1px"><svg viewBox="0.5 0.5 34 34"><path d="M8 8H24.6M8 8V24.2" stroke="#999" stroke-width="0.7" fill="none" /><circle cx="8" cy="8" r="2.4" fill="#f00"/><circle cx="24.6" cy="8" r="1.2" fill="#000"/><circle cx="8" cy="24.2" r="1.2" fill="#000"/><text x="22" y="19.5" font-size="11" fill="#000" font-family="Liberation Sans,sans-serif">2</text><text x="11.8" y="28" font-size="11" fill="#000" font-family="Liberation Sans,sans-serif">1</text></svg></div>
<div class="lb" style="left:36.3px;top:419.1px"><svg viewBox="0.5 0.5 34 34"><path d="M24.6 8V24.2M8 24.2H24.6" stroke="#999" stroke-width="0.7" fill="none" /><circle cx="24.6" cy="24.2" r="2.4" fill="#f00"/><circle cx="24.6" cy="8" r="1.2" fill="#000"/><circle cx="8" cy="24.2" r="1.2" fill="#000"/><text x="16" y="14.5" font-size="11" fill="#000" font-family="Liberation Sans,sans-serif">2</text><text x="5.5" y="22" font-size="11" fill="#000" font-family="Liberation Sans,sans-serif">1</text></svg></div>
<div class="lb" style="left:1.2px;top:462.1px"><svg viewBox="0.5 0.5 34 34"><path d="M6.5 7H27.5V24.5H13.5V18.5H6.5Z" stroke="#f4b4b4" stroke-width="0.9" fill="none" /><circle cx="13" cy="13.5" r="3.6" fill="none" stroke="#f4b4b4" stroke-width="0.9"/><path d="M17 21.8L24 21.8L24 14.8Z" stroke="#f4b4b4" stroke-width="0.9" fill="none" /><circle cx="16.6" cy="16.4" r="1.7" fill="#f33"/></svg></div>
<div class="lb" style="left:1.2px;top:505.1px;background:#c9c9c9;border-radius:4px;border-color:#b0b0b0"><svg viewBox="0.5 0.5 34 34"><line x1="13" y1="17.2" x2="21.4" y2="17.2" stroke="#111" stroke-width="0.9" /><line x1="17.2" y1="13" x2="17.2" y2="21.4" stroke="#111" stroke-width="0.9" /></svg></div>
<div class="lb" style="left:36.3px;top:505.1px"><svg viewBox="0.5 0.5 34 34"><line x1="4.3" y1="15.9" x2="27.5" y2="15.9" stroke="#000" stroke-width="1.1" /><line x1="15.9" y1="4.7" x2="15.9" y2="27.2" stroke="#000" stroke-width="1.1" /><circle cx="15.9" cy="15.9" r="3.3" fill="none" stroke="#f00" stroke-width="1"/><line x1="12.600000000000001" y1="15.9" x2="19.2" y2="15.9" stroke="#f00" stroke-width="1" /><line x1="15.9" y1="12.600000000000001" x2="15.9" y2="19.2" stroke="#f00" stroke-width="1" /></svg></div>
<div class="lb" style="left:1.2px;top:540.1px"><svg viewBox="0.5 0.5 34 34"><line x1="4.5" y1="16.4" x2="28.2" y2="16.4" stroke="#000" stroke-width="1.1" /><circle cx="15.6" cy="16.4" r="3.3" fill="none" stroke="#f00" stroke-width="1"/><line x1="12.3" y1="16.4" x2="18.9" y2="16.4" stroke="#f00" stroke-width="1" /><line x1="15.6" y1="13.099999999999998" x2="15.6" y2="19.7" stroke="#f00" stroke-width="1" /></svg></div>
<div class="lb" style="left:36.3px;top:540.1px"><svg viewBox="0.5 0.5 34 34"><line x1="15.9" y1="4.7" x2="15.9" y2="28.2" stroke="#000" stroke-width="1.1" /><circle cx="15.9" cy="16.4" r="3.3" fill="none" stroke="#f00" stroke-width="1"/><line x1="12.600000000000001" y1="16.4" x2="19.2" y2="16.4" stroke="#f00" stroke-width="1" /><line x1="15.9" y1="13.099999999999998" x2="15.9" y2="19.7" stroke="#f00" stroke-width="1" /></svg></div>
<div class="lb" style="left:1.2px;top:575.1px"><svg viewBox="0.5 0.5 34 34"><line x1="24.6" y1="22.7" x2="28.6" y2="22.1" stroke="#999" stroke-width="0.9" /><line x1="23.3" y1="18.0" x2="26.0" y2="16.8" stroke="#999" stroke-width="0.9" /><line x1="20.7" y1="13.9" x2="23.8" y2="11.3" stroke="#999" stroke-width="0.9" /><line x1="17.1" y1="10.6" x2="18.8" y2="8.1" stroke="#999" stroke-width="0.9" /><line x1="12.7" y1="8.5" x2="13.9" y2="4.7" stroke="#999" stroke-width="0.9" /><line x1="7.9" y1="7.6" x2="8.0" y2="4.6" stroke="#999" stroke-width="0.9" /><line x1="9.2" y1="24" x2="25.1" y2="15.4" stroke="#000" stroke-width="1.2" /><circle cx="7.3" cy="25.1" r="3.3" fill="none" stroke="#f00" stroke-width="1"/><line x1="4.0" y1="25.1" x2="10.6" y2="25.1" stroke="#f00" stroke-width="1" /><line x1="7.3" y1="21.8" x2="7.3" y2="28.400000000000002" stroke="#f00" stroke-width="1" /></svg></div>
<div class="lb" style="left:1.2px;top:618.1px"><svg viewBox="0.5 0.5 34 34"><circle cx="13.3" cy="10.7" r="3.3" fill="none" stroke="#f00" stroke-width="1"/><line x1="10.0" y1="10.7" x2="16.6" y2="10.7" stroke="#f00" stroke-width="1" /><line x1="13.3" y1="7.3999999999999995" x2="13.3" y2="14.0" stroke="#f00" stroke-width="1" /><path d="M0 0V14.2L3.4 11.2 5.9 16.8 8.1 15.8 5.7 10.4H10.2Z" transform="translate(15.5,14.5) scale(0.82)" fill="#fff" stroke="#444" stroke-width="1"/></svg></div>
<div class="lb" style="left:36.3px;top:618.1px"><svg viewBox="0.5 0.5 34 34"><ellipse cx="10.2" cy="12.3" rx="2.4" ry="3.6" fill="none" stroke="#000" stroke-width="1.3"/><path d="M12.799999999999999 11.4H25.4V15.9H21.4V13.200000000000001H12.799999999999999Z" stroke="none" stroke-width="0" fill="#000" /><circle cx="15.9" cy="24.6" r="3.3" fill="none" stroke="#f00" stroke-width="1"/><line x1="12.600000000000001" y1="24.6" x2="19.2" y2="24.6" stroke="#f00" stroke-width="1" /><line x1="15.9" y1="21.3" x2="15.9" y2="27.900000000000002" stroke="#f00" stroke-width="1" /></svg></div>
<div class="lb" style="left:1.2px;top:661.1px"><svg viewBox="0.5 0.5 34 34"><ellipse cx="9.7" cy="16.1" rx="2.4" ry="3.6" fill="none" stroke="#000" stroke-width="1.3"/><path d="M12.299999999999999 15.200000000000001H24.9V19.700000000000003H20.9V17.0H12.299999999999999Z" stroke="none" stroke-width="0" fill="#000" /></svg></div>
</div>
<div id="tabbar" class="a">
<svg class="a" style="left:5px;top:5.600px" width="12" height="12" viewBox="0 0 12 12"><path d="M1.5 1.5l9 9M10.500 1.5l-9 9" stroke="#4a4a4a" stroke-width="1" fill="none"/></svg>
<svg class="a" style="left:22px;top:3px" width="16" height="17" viewBox="0 0 16 17"><circle cx="7" cy="7" r="5.6" fill="#e9eef8" stroke="#2f4f9f" stroke-width="1.6"/><path d="M7 2.4V11.600M2.400 7H11.600M3.800 3.800l6.400 6.400" stroke="#c86a28" stroke-width=".8" fill="none"/><path d="M10.800 11l3.400 4" stroke="#e89a1e" stroke-width="2.200" stroke-linecap="round"/></svg>
<span class="t" style="left:519.500px;top:6.200px;font-size:11.900px;color:#111">* birdhouse.dxf</span>
</div>
<div id="hruler" class="a"><i class="a" style="left:75.7px;top:17px;width:1px;height:7px;background:#444"></i><span class="rl" style="left:56.2px;width:40px;text-align:center;top:2.900px">0</span><i class="a" style="left:148.2px;top:17px;width:1px;height:7px;background:#444"></i><span class="rl" style="left:128.7px;width:40px;text-align:center;top:2.900px">100</span><i class="a" style="left:220.7px;top:17px;width:1px;height:7px;background:#444"></i><span class="rl" style="left:201.2px;width:40px;text-align:center;top:2.900px">200</span><i class="a" style="left:293.2px;top:17px;width:1px;height:7px;background:#444"></i><span class="rl" style="left:273.7px;width:40px;text-align:center;top:2.900px">300</span><i class="a" style="left:365.7px;top:17px;width:1px;height:7px;background:#444"></i><span class="rl" style="left:346.2px;width:40px;text-align:center;top:2.900px">400</span><i class="a" style="left:438.2px;top:17px;width:1px;height:7px;background:#444"></i><span class="rl" style="left:418.7px;width:40px;text-align:center;top:2.900px">500</span><i class="a" style="left:510.7px;top:17px;width:1px;height:7px;background:#444"></i><span class="rl" style="left:491.2px;width:40px;text-align:center;top:2.900px">600</span><i class="a" style="left:583.2px;top:17px;width:1px;height:7px;background:#444"></i><span class="rl" style="left:563.7px;width:40px;text-align:center;top:2.900px">700</span><i class="a" style="left:655.7px;top:17px;width:1px;height:7px;background:#444"></i><span class="rl" style="left:636.2px;width:40px;text-align:center;top:2.900px">800</span><i class="a" style="left:728.2px;top:17px;width:1px;height:7px;background:#444"></i><span class="rl" style="left:708.7px;width:40px;text-align:center;top:2.900px">900</span><i class="a" style="left:800.7px;top:17px;width:1px;height:7px;background:#444"></i><span class="rl" style="left:781.2px;width:40px;text-align:center;top:2.900px">1000</span><i class="a" style="left:873.2px;top:17px;width:1px;height:7px;background:#444"></i><span class="rl" style="left:853.7px;width:40px;text-align:center;top:2.900px">1100</span><i class="a" style="left:945.7px;top:17px;width:1px;height:7px;background:#444"></i><span class="rl" style="left:926.2px;width:40px;text-align:center;top:2.900px">1200</span><i class="a" style="left:1018.2px;top:17px;width:1px;height:7px;background:#444"></i><span class="rl" style="left:998.7px;width:40px;text-align:center;top:2.900px">1300</span><svg class="a" style="left:410.500px;top:13.900px" width="12" height="8" viewBox="0 0 12 8"><path d="M0 0H12L6 6.300Z" fill="#000"/></svg></div>
<div id="vruler" class="a"><i class="a" style="left:16px;top:570.0px;width:7px;height:1px;background:#444"></i><span class="rl" style="left:-13.600px;width:40px;text-align:center;top:565.4px;transform:rotate(-90deg)">-200</span><i class="a" style="left:16px;top:497.5px;width:7px;height:1px;background:#444"></i><span class="rl" style="left:-13.600px;width:40px;text-align:center;top:492.9px;transform:rotate(-90deg)">-100</span><i class="a" style="left:16px;top:425.0px;width:7px;height:1px;background:#444"></i><span class="rl" style="left:-13.600px;width:40px;text-align:center;top:420.4px;transform:rotate(-90deg)">0</span><i class="a" style="left:16px;top:352.5px;width:7px;height:1px;background:#444"></i><span class="rl" style="left:-13.600px;width:40px;text-align:center;top:347.9px;transform:rotate(-90deg)">100</span><i class="a" style="left:16px;top:280.0px;width:7px;height:1px;background:#444"></i><span class="rl" style="left:-13.600px;width:40px;text-align:center;top:275.4px;transform:rotate(-90deg)">200</span><i class="a" style="left:16px;top:207.5px;width:7px;height:1px;background:#444"></i><span class="rl" style="left:-13.600px;width:40px;text-align:center;top:202.9px;transform:rotate(-90deg)">300</span><i class="a" style="left:16px;top:135.0px;width:7px;height:1px;background:#444"></i><span class="rl" style="left:-13.600px;width:40px;text-align:center;top:130.4px;transform:rotate(-90deg)">400</span><i class="a" style="left:16px;top:62.5px;width:7px;height:1px;background:#444"></i><span class="rl" style="left:-13.600px;width:40px;text-align:center;top:57.9px;transform:rotate(-90deg)">500</span><svg class="a" style="left:13.100px;top:172.800px" width="8" height="12" viewBox="0 0 8 12"><path d="M0 0V12L6.100 6Z" fill="#000"/></svg></div>
<div id="canvas" class="a"><svg class="a" style="left:0;top:0" width="1044" height="577" viewBox="95 155 1044 577" fill="none" stroke-linecap="butt">
<path d="M147.7 725.5h1M147.7 653.0h1M147.7 580.5h1M147.7 508.0h1M147.7 435.5h1M147.7 363.0h1M147.7 290.5h1M147.7 218.0h1M220.2 725.5h1M220.2 653.0h1M220.2 580.5h1M220.2 508.0h1M220.2 435.5h1M220.2 363.0h1M220.2 290.5h1M220.2 218.0h1M292.7 725.5h1M292.7 653.0h1M292.7 580.5h1M292.7 508.0h1M292.7 435.5h1M292.7 363.0h1M292.7 290.5h1M292.7 218.0h1M365.2 725.5h1M365.2 653.0h1M365.2 580.5h1M365.2 508.0h1M365.2 435.5h1M365.2 363.0h1M365.2 290.5h1M365.2 218.0h1M437.7 725.5h1M437.7 653.0h1M437.7 580.5h1M437.7 508.0h1M437.7 435.5h1M437.7 363.0h1M437.7 290.5h1M437.7 218.0h1M510.2 725.5h1M510.2 653.0h1M510.2 580.5h1M510.2 508.0h1M510.2 435.5h1M510.2 363.0h1M510.2 290.5h1M510.2 218.0h1M582.7 725.5h1M582.7 653.0h1M582.7 580.5h1M582.7 508.0h1M582.7 435.5h1M582.7 363.0h1M582.7 290.5h1M582.7 218.0h1M655.2 725.5h1M655.2 653.0h1M655.2 580.5h1M655.2 508.0h1M655.2 435.5h1M655.2 363.0h1M655.2 290.5h1M655.2 218.0h1M727.7 725.5h1M727.7 653.0h1M727.7 580.5h1M727.7 508.0h1M727.7 435.5h1M727.7 363.0h1M727.7 290.5h1M727.7 218.0h1M800.2 725.5h1M800.2 653.0h1M800.2 580.5h1M800.2 508.0h1M800.2 435.5h1M800.2 363.0h1M800.2 290.5h1M800.2 218.0h1M872.7 725.5h1M872.7 653.0h1M872.7 580.5h1M872.7 508.0h1M872.7 435.5h1M872.7 363.0h1M872.7 290.5h1M872.7 218.0h1M945.2 725.5h1M945.2 653.0h1M945.2 580.5h1M945.2 508.0h1M945.2 435.5h1M945.2 363.0h1M945.2 290.5h1M945.2 218.0h1M1017.7 725.5h1M1017.7 653.0h1M1017.7 580.5h1M1017.7 508.0h1M1017.7 435.5h1M1017.7 363.0h1M1017.7 290.5h1M1017.7 218.0h1M1090.2 725.5h1M1090.2 653.0h1M1090.2 580.5h1M1090.2 508.0h1M1090.2 435.5h1M1090.2 363.0h1M1090.2 290.5h1M1090.2 218.0h1" stroke="#6a6a6a" stroke-width="1"/>
<path d="M148.200 155V732M873.200 155V732M95 580.500H1139" stroke="#303030" stroke-width="1"/>
<defs><radialGradient id="gl" cx="491.800" cy="325.700" r="40" gradientUnits="userSpaceOnUse"><stop offset=".77" stop-color="#2a3a4a" stop-opacity="0"/><stop offset=".84" stop-color="#34485a" stop-opacity=".42"/><stop offset=".91" stop-color="#4d6379" stop-opacity=".7"/><stop offset=".955" stop-color="#6a8198" stop-opacity=".75"/><stop offset=".98" stop-color="#7a90a6" stop-opacity=".45"/><stop offset="1" stop-color="#8aa0b4" stop-opacity="0"/></radialGradient></defs>
<circle cx="491.800" cy="325.700" r="40" fill="url(#gl)"/>
<circle cx="491.800" cy="325.700" r="38.4" stroke="#b4c6d6" stroke-opacity="0.3" stroke-width=".6"/>
<circle cx="491.800" cy="325.700" r="37" stroke="#b4c6d6" stroke-opacity="0.25" stroke-width=".6"/>
<circle cx="491.800" cy="325.700" r="35.6" stroke="#b4c6d6" stroke-opacity="0.2" stroke-width=".6"/>
<circle cx="491.800" cy="325.700" r="34.2" stroke="#b4c6d6" stroke-opacity="0.14" stroke-width=".6"/>
<circle cx="491.800" cy="325.700" r="32.8" stroke="#b4c6d6" stroke-opacity="0.08" stroke-width=".6"/>
<path d="M128.200 580.500H168.200M148.200 560.500V600.500" stroke="#7a0000" stroke-width="1"/>
<path d="M351 166.8H488.4V333.8H351Z" stroke="#7a187a" stroke-width="1.1"/>
<g stroke="#b00000" stroke-width="1"><circle cx="351" cy="166.8" r="5.2"/><path d="M345.800 166.8H356.200M351 161.6V172"/></g>
<g stroke="#d4d4d4" stroke-width=".85" stroke-linejoin="round">
<path d="M474.8 175.3H373Q371 175.3 371 177.3V304.6Q371 306.6 373 306.6H474.8V298.9H461.6V296.4H474.8V185.7H461.6V183.1H474.8Z"/>
<path d="M503 175.3H604.6Q606.6 175.3 606.6 177.3V304.6Q606.6 306.6 604.6 306.6H503V298.9H515.8V296.4H503V185.7H515.8V183.1H503Z"/>
<path d="M425 182.9H440.7V185.7H425Z"/>
<path d="M425 296.2H440.7V298.9H425Z"/>
<path d="M537.2 182.9H552.3V185.7H537.2Z"/>
<path d="M537.2 296.2H552.3V298.9H537.2Z"/>
<path d="M474.9 572.4H396.2Q394.2 572.4 394.2 574.4V702.1Q394.2 704.1 396.2 704.1H474.9V696.7H452V693H474.9V583.2H452V579.8H474.9Z"/>
<path d="M503.3 572.4H581.7Q583.7 572.4 583.7 574.4V702.1Q583.7 704.1 581.7 704.1H503.3V696.7H525.7V693H503.3V583.2H525.7V579.8H503.3Z"/>
<path d="M394.2 558H474.9V565.4H394.2Z"/>
<path d="M394.2 711H474.9V718.6H394.2Z"/>
<path d="M503.3 558H583.7V565.4H503.3Z"/>
<path d="M503.3 711H583.7V718.6H503.3Z"/>
<path d="M379.6 575.1H387.7V700.6H379.6Z"/>
<path d="M590 575.1H598V700.6H590Z"/>
<path d="M479.2 358A9.650 9.650 0 0 1 497.8 358L497.8 374.1 514.5 387.4 516.4 385.3 527.8 394.7 525.7 396.9 546.3 413.7 533.1 490.2 509.4 490.2 509.4 493.2 530.8 493.2 531.8 494.2 531.2 499.7 530.2 500.7 L446.8 500.7 445.8 499.7 445.2 494.2 446.2 493.2 467.6 493.2 467.6 490.2 443.9 490.2 430.7 413.7 451.3 396.9 449.2 394.7 460.6 385.3 462.5 387.4 479.2 374.1Z"/>
<circle cx="488.5" cy="358" r="2.3"/>
<g transform="translate(0.00,0.00) scale(1.0)"><circle cx="488.700" cy="425.200" r="20.800"/><path d="M491.100 411.400L487.600 410.800C485 410 482 409.800 479.900 411.800C478.600 413.200 478.500 416 478.300 418.500C478 421 477.200 423 477.400 425.500C477.600 428 479.500 430 481.800 431.900C484 433.500 486.500 434.500 487.600 435.700M491.100 411.400L489.500 413.700L488.900 414.600C489.500 417 492 419.500 493.400 421C495 423.500 497 428 499.100 431.300C501 434 503 436.500 504.200 438L502.900 439.600C501 441.500 499.500 443 497.800 443.400C495.500 442 493.500 440.500 492.100 438.900C491 437.800 490.300 437 490.800 436.400C491.800 435 492.800 434.300 494 434.100C495.500 434 496.500 435 497.800 435.700C499.500 436.500 500.500 437 501.700 437.700" stroke-width=".9"/><path d="M469 427.400L486.300 434.800M468.400 428.700L494 444.100L495.200 443.200M470.500 429L488 438.500M469 427.400L468.400 428.700" stroke-width=".8"/></g>
<path d="M863.300 554.300V544.300A9.500 9.500 0 0 1 882.300 544.300V554.300"/>
<circle cx="872.8" cy="544.200" r="2.3"/>
<path d="M872.8 550.400L792.600 614.200L794.800 616.600L872.8 553.800L950.8 616.600L953.0 614.200Z"/>
<path d="M814.700 600.400L827 669M930.9 600.400L918.6 669"/>
<path d="M793.400 669H952.800V676.800H793.400ZM793.400 678.900H952.800M793.400 676.800V678.900M952.800 676.800V678.900"/>
<path d="M828.300 678.900V683.700Q828.300 686.700 831.300 686.700H914.700Q917.700 686.700 917.700 683.700V678.900"/>
<g transform="translate(384.10,185.90) scale(1.0)"><circle cx="488.700" cy="425.200" r="20.800"/><path d="M491.100 411.400L487.600 410.800C485 410 482 409.800 479.900 411.800C478.600 413.200 478.500 416 478.300 418.500C478 421 477.200 423 477.400 425.500C477.600 428 479.500 430 481.800 431.900C484 433.500 486.500 434.500 487.600 435.700M491.100 411.400L489.500 413.700L488.900 414.600C489.500 417 492 419.500 493.400 421C495 423.500 497 428 499.100 431.300C501 434 503 436.500 504.200 438L502.900 439.600C501 441.500 499.500 443 497.800 443.400C495.500 442 493.500 440.500 492.100 438.900C491 437.800 490.300 437 490.800 436.400C491.800 435 492.800 434.300 494 434.100C495.500 434 496.500 435 497.800 435.700C499.500 436.500 500.500 437 501.700 437.700" stroke-width=".9"/><path d="M469 427.400L486.300 434.800M468.400 428.700L494 444.100L495.200 443.200M470.500 429L488 438.500M469 427.400L468.400 428.700" stroke-width=".8"/></g>
<path d="M834 579.500L845 571M900.500 571L911.500 579.500" stroke-width=".7"/>
</g>
<g stroke="#960000" stroke-width=".9" stroke-dasharray="5 1.5 1 1.5">
<path d="M459 425.200H518M474 358H503.600M488.500 341V516"/>
<path d="M872.8 521.700V697"/>
</g>
<g stroke="#007c7c" stroke-width=".8">
<path d="M793.400 680V713.500M952.800 680V713.500M793.400 710.700H952.800M875 534.800H977.500M918 686.400H977.500M975 534.800V686.400"/>
<path d="M793.400 710.700l5 -1.300v2.600ZM952.800 710.700l-5 -1.300v2.600ZM975 534.800l-1.300 5h2.600ZM975 686.400l-1.300 -5h2.600Z" fill="#008080"/>
</g>
<text x="872.800" y="709.300" font-size="5.800" fill="#008080" text-anchor="middle" font-family="Liberation Sans,sans-serif">220</text>
<text transform="translate(973.600,610) rotate(-90)" font-size="5.800" fill="#008080" text-anchor="middle" font-family="Liberation Sans,sans-serif">209</text>
<g stroke="#d4d4d4" stroke-width=".8" stroke-linejoin="round">
<path d="M760.400 321.700L856.900 266L895.400 253M760.400 321.700L761.200 323.600L816.500 302.600M760.400 321.700L815.200 301M815.200 301.500V289A5.400 5.400 0 0 1 820.400 285C826 285.500 830.800 290 830.800 296V307.200L828.900 308.500L816.500 302.600M818 284.800C824 284.200 832.300 288.500 832.600 296.500V306L830.800 307.200M830.800 293.400L900.800 252.900M832.600 294.800L902.200 254.300M895.400 254.300V243.400A5.400 5.400 0 0 1 900.800 238.200C906 238.600 910.400 243 910.400 249V261.800L909 262.500L902.200 252.900M898.500 238C904.500 237.300 912 241.500 912.200 249.500V260.500L910.400 261.800M816.500 302.600L873.300 387.300L965.700 333.900L911.100 250.900M818.200 301.800L838.500 332M922.400 282.900L924.400 281.500L931.900 292.200L929.900 293.500ZM842.100 328.800L843.900 327.600L851.300 338.600L849.500 339.800ZM875 260.100L883.100 257.300M876 261L884 258.200M795 307.500L803.500 304.600M796 308.500L804.500 305.600M781.300 317.300L790.100 381.600M863.300 372.400L855.200 419.400M861.200 373.900L854 418.600M939.500 349.300L934.900 374.200M937.200 350.600L933.400 373.600M914.900 363.900L934.900 374.200M760.500 366.200L873.300 430.200L965.700 378.200M760.500 367.800L873.300 431.800L965.700 379.800M760.500 375.500L873.300 440.500L965.700 386.600M760.500 373.900L873.300 438.900L965.700 385M760.500 366.200V375.500M873.300 430.200V440.500M965.700 378.200V386.600M874.900 431V439.600M964.200 379V387.400M760.500 366.200L785.700 352.700M762 367L786.300 354.400M769.700 368.100L787 359.800M965.700 378.200L938.800 363.600M964 379L937.500 365M957.500 381.500L936.500 369.800M769.700 368.100L790 380M957.500 381.500L875.500 428.500M958.500 383.200L876.500 430M816.600 398.900V407.800M817.800 399.600V408.500"/>
<ellipse cx="822" cy="294.800" rx="1.700" ry="2.300" transform="rotate(-20 822 294.800)"/><ellipse cx="901.900" cy="248.600" rx="1.700" ry="2.300" transform="rotate(-20 901.900 248.600)"/>
<g transform="translate(821.600,349) rotate(-22)"><ellipse rx="12.500" ry="20" /><ellipse rx="9.800" ry="17.300" cx="1.500" cy=".5"/><path d="M1 -11C3 -6 3.500 2 2 9M3.500 -10C6 -4 6 4 4 10M-3 8L5 14M-2 11L3 15" stroke-width=".8"/></g>
</g>
<path d="M95 333.900H1139M488.400 155V732" stroke="#9a720a" stroke-width="1.250" stroke-dasharray="4.400 1.600"/>
<circle cx="488.400" cy="333.800" r="4.200" stroke="#d99000" stroke-width="1"/>
<text x="496.300" y="352.300" font-size="13.600" fill="#e8b41c" font-family="Liberation Sans,sans-serif">Eind</text>
<path d="M476.300 325.700H507.300M491.800 310.200V341.200" stroke="#c8c8c8" stroke-width="3.400"/>
<circle cx="491.800" cy="325.700" r="1.600" fill="#111"/>
</svg></div>
<!-- scrollbars -->
<div class="a" style="left:1139px;top:155px;width:15px;height:577px;background:#fafafa;border-left:1px solid #e8e8e8"></div>
<div class="a" style="left:1142.700px;top:319.200px;width:8.600px;height:244.600px;border-radius:4.500px;background:#7f7f7f"></div>
<div class="a" style="left:95px;top:732px;width:972px;height:16px;background:#fafafa;border-top:1px solid #e8e8e8"></div>
<div class="a" style="left:183px;top:735.500px;width:718px;height:8.500px;border-radius:4.500px;background:#7f7f7f"></div>
<div class="a" style="left:1067px;top:732px;width:87px;height:16px;background:#ececec"></div>
<span class="t" style="left:1086.400px;top:733.600px;font-size:13.300px;color:#111">100 &lt; 1000</span>
<!-- command area -->
<div class="a" style="left:72px;top:748px;width:1082px;height:50px;background:#ececec"></div>
<div class="a" style="left:72px;top:749px;width:1082px;height:22px;background:#fff;border:1px solid #c8c8c8;border-right:none"></div>
<div class="a" style="left:1138px;top:750px;width:15px;height:20px;background:#fafafa;border-left:1px solid #e8e8e8"></div>
<div class="a" style="left:1142.200px;top:749.400px;width:7.800px;height:17.300px;border-radius:4px;background:#7f7f7f"></div>
<span class="t" style="left:77px;top:751.800px;font-size:13.200px;letter-spacing:.3px;color:#0000c8;font-style:italic">Opdracht:</span><span class="t" style="left:140.800px;top:751.800px;font-size:13.200px;color:#0000c8">vt</span>
<span class="t" style="left:73px;top:778.500px;font-size:13.500px;color:#111">Tweede hoekpunt:</span>
<div class="a" style="left:187px;top:775px;width:940px;height:20px;background:#fff"></div>
<div class="a" style="left:1127px;top:772px;width:26px;height:25.500px;background:linear-gradient(#f6f6f6,#ececec);border:1px solid #bdbdbd"><svg class="a" style="left:5px;top:7px" width="15" height="11" viewBox="0 0 15 11"><rect x=".5" y=".5" width="14" height="10" fill="#fff" stroke="#111"/><rect x=".5" y=".5" width="14" height="2.500" fill="#111"/></svg></div>
<div class="a" style="left:1153.500px;top:108px;width:1.300px;height:690px;background:#e4e4e4"></div><div class="a" style="left:1154.800px;top:130px;width:1px;height:668px;background:#c6c6c6"></div>
<div id="right" class="a">
<div class="dockt" style="top:0;padding-left:36px">Blokkenlijst</div>
<svg class="a" style="left:0;top:0" width="40" height="22" viewBox="0 0 40 22"><circle cx="10" cy="10.5" r="7" fill="#5c5c5c"/><path d="M7 7.5l6 6M13 7.5l-6 6" stroke="#fff" stroke-width="2" stroke-linecap="round"/><circle cx="28" cy="10.5" r="7" fill="#5c5c5c"/><rect x="26.5" y="7.3" width="5" height="4" fill="none" stroke="#fff" stroke-width="1.100"/><rect x="24.5" y="9.5" width="5" height="4" fill="#5c5c5c" stroke="#fff" stroke-width="1.100"/></svg>
<div class="dbtn" style="left:1.6px;top:22.600px;width:37.3px;height:25px"></div>
<div class="dbtn" style="left:38.9px;top:22.600px;width:37.3px;height:25px"></div>
<div class="dbtn" style="left:76.2px;top:22.600px;width:37.3px;height:25px"></div>
<div class="dbtn" style="left:113.6px;top:22.600px;width:37.3px;height:25px"></div>
<div class="dbtn" style="left:150.9px;top:22.600px;width:37.3px;height:25px"></div>
<div class="dbtn" style="left:188.2px;top:22.600px;width:37.3px;height:25px"></div>
<div class="dbtn" style="left:225.6px;top:22.600px;width:37.3px;height:25px"></div>
<div class="dbtn" style="left:262.9px;top:22.600px;width:37.3px;height:25px"></div>
<svg class="a" style="left:0;top:0;pointer-events:none" width="300" height="50" viewBox="0 0 300 50"><g transform="translate(20.262500000000003,35) scale(1)"><path d="M-7.700 .4C-6.600 -2.800 -3.600 -5.600 0 -5.600S6.400 -3 7.700 .4C6.200 3.200 3.400 5.600 0 5.600S-6.400 3.400 -7.700 .4Z" fill="#000"/><ellipse cx="0" cy=".9" rx="5" ry="3.300" fill="#fff"/><circle cx="0" cy="-1" r="3.100" fill="#000"/><circle cx="-.9" cy="-1.500" r=".65" fill="#fff" fill-opacity=".8"/></g><g transform="translate(57.587500000000006,35) scale(1)"><path d="M-7.700 .4C-6.600 -2.800 -3.600 -5.600 0 -5.600S6.400 -3 7.700 .4C6.200 3.200 3.400 5.600 0 5.600S-6.400 3.400 -7.700 .4Z" fill="#b0b0b0"/><ellipse cx="0" cy=".9" rx="5" ry="3.300" fill="#fff"/><circle cx="0" cy="-1" r="3.100" fill="#b0b0b0"/><circle cx="-.9" cy="-1.500" r=".65" fill="#fff" fill-opacity=".8"/></g><path d="M88.4 35H101.4M94.9 28.5V41.5" stroke="#e00000" stroke-width="2.800" fill="none"/><path d="M88.4 36.2H101.4" stroke="#9a0000" stroke-width=".6" fill="none"/><path d="M126.19999999999999 35H138.2" stroke="#e00000" stroke-width="2.800" fill="none"/><path d="M126.19999999999999 36.3H138.2" stroke="#9a0000" stroke-width=".6" fill="none"/><text x="162.1" y="39" font-size="11" fill="#111" font-family="Liberation Sans,sans-serif">a</text><text x="171.4" y="39" font-size="11" fill="#111" font-family="Liberation Sans,sans-serif">b</text><path d="M169.6 29.500V41" stroke="#111" stroke-width=".8"/><g transform="translate(206.9,35) scale(1) rotate(40)"><path d="M-1.700 -8H1.700V5L0 8.500L-1.700 5Z" fill="#e8a93c" stroke="#8a5a14" stroke-width=".5"/><path d="M-1.700 -8H1.700V-6H-1.700Z" fill="#d43a2a"/><path d="M-1.700 5L0 8.500L1.700 5Z" fill="#f0d9b0" stroke="#8a5a14" stroke-width=".4"/><path d="M-.6 7.200L0 8.500L.6 7.200Z" fill="#222"/></g><rect x="239.2" y="29" width="10" height="12.500" fill="#dfe6f5" stroke="#c5cbd8" stroke-width=".6"/><path d="M241.2 30.500c4 0 4.500 2 4.500 5" fill="none" stroke="#1a3fe0" stroke-width="1.800"/><path d="M242.4 35l3.300 4.800l3.300 -4.800Z" fill="#1a3fe0"/><rect x="277.0" y="30.500" width="9" height="9" fill="#e0523a" stroke="#b43c28" stroke-width=".6"/><path d="M279.3 32.800l4.400 4.400M283.7 32.800l-4.400 4.400" stroke="#fff" stroke-width="1.300"/></svg>
<div class="list" style="top:48px;height:175px;border-bottom:1px solid #bcbcbc">
<div class="row" style="top:1px"><span class="nm" style="left:49.400px">Model (*Model_Space)</span></div>
<div class="row" style="top:21px"><span class="nm" style="left:49.400px;letter-spacing:-.2px">Layout1 (*Paper_Space)</span></div>
<div class="row" style="top:40.500px;background:#d4d4d4"><span class="nm" style="left:49.400px">Rand</span></div>
<svg class="a" style="left:0;top:0" width="60" height="62" viewBox="0 0 60 62"><g transform="translate(12.5,10.8) scale(1)"><path d="M-7.700 .4C-6.600 -2.800 -3.600 -5.600 0 -5.600S6.400 -3 7.700 .4C6.200 3.200 3.400 5.600 0 5.600S-6.400 3.400 -7.700 .4Z" fill="#000"/><ellipse cx="0" cy=".9" rx="5" ry="3.300" fill="#fff"/><circle cx="0" cy="-1" r="3.100" fill="#000"/><circle cx="-.9" cy="-1.500" r=".65" fill="#fff" fill-opacity=".8"/></g><g transform="translate(12.5,30.8) scale(1)"><path d="M-7.700 .4C-6.600 -2.800 -3.600 -5.600 0 -5.600S6.400 -3 7.700 .4C6.200 3.200 3.400 5.600 0 5.600S-6.400 3.400 -7.700 .4Z" fill="#000"/><ellipse cx="0" cy=".9" rx="5" ry="3.300" fill="#fff"/><circle cx="0" cy="-1" r="3.100" fill="#000"/><circle cx="-.9" cy="-1.500" r=".65" fill="#fff" fill-opacity=".8"/></g><g transform="translate(12.5,50.8) scale(1)"><path d="M-7.700 .4C-6.600 -2.800 -3.600 -5.600 0 -5.600S6.400 -3 7.700 .4C6.200 3.200 3.400 5.600 0 5.600S-6.400 3.400 -7.700 .4Z" fill="#27394f"/><ellipse cx="0" cy=".9" rx="5" ry="3.300" fill="#8f99a6"/><circle cx="0" cy="-1" r="3.100" fill="#27394f"/><circle cx="-.9" cy="-1.500" r=".65" fill="#fff" fill-opacity=".8"/></g><g transform="translate(35,10.5) scale(1.08) rotate(40)"><path d="M-1.700 -8H1.700V5L0 8.500L-1.700 5Z" fill="#e8a93c" stroke="#8a5a14" stroke-width=".5"/><path d="M-1.700 -8H1.700V-6H-1.700Z" fill="#d43a2a"/><path d="M-1.700 5L0 8.500L1.700 5Z" fill="#f0d9b0" stroke="#8a5a14" stroke-width=".4"/><path d="M-.6 7.200L0 8.500L.6 7.200Z" fill="#222"/></g></svg>
</div>
<div class="dockt" style="top:223px;height:23.500px;line-height:23px;padding-left:36px">Lagenlijst</div>
<svg class="a" style="left:0;top:223px" width="40" height="23" viewBox="0 0 40 23"><circle cx="10" cy="11.2" r="7" fill="#5c5c5c"/><path d="M7 8.2l6 6M13 8.2l-6 6" stroke="#fff" stroke-width="2" stroke-linecap="round"/><circle cx="28" cy="11.2" r="7" fill="#5c5c5c"/><rect x="26.5" y="7.999999999999999" width="5" height="4" fill="none" stroke="#fff" stroke-width="1.100"/><rect x="24.5" y="10.2" width="5" height="4" fill="#5c5c5c" stroke="#fff" stroke-width="1.100"/></svg>
<div class="dbtn" style="left:1.6px;top:246.400px;width:59.7px;height:25px"></div>
<div class="dbtn" style="left:61.3px;top:246.400px;width:59.7px;height:25px"></div>
<div class="dbtn" style="left:121.0px;top:246.400px;width:59.7px;height:25px"></div>
<div class="dbtn" style="left:180.8px;top:246.400px;width:59.7px;height:25px"></div>
<div class="dbtn" style="left:240.5px;top:246.400px;width:59.7px;height:25px"></div>
<svg class="a" style="left:0;top:0;pointer-events:none" width="300" height="280" viewBox="0 0 300 280"><g transform="translate(31.5,259) scale(1)"><path d="M-7.700 .4C-6.600 -2.800 -3.600 -5.600 0 -5.600S6.400 -3 7.700 .4C6.200 3.200 3.400 5.600 0 5.600S-6.400 3.400 -7.700 .4Z" fill="#000"/><ellipse cx="0" cy=".9" rx="5" ry="3.300" fill="#fff"/><circle cx="0" cy="-1" r="3.100" fill="#000"/><circle cx="-.9" cy="-1.500" r=".65" fill="#fff" fill-opacity=".8"/></g><g transform="translate(91.2,259) scale(1)"><path d="M-7.700 .4C-6.600 -2.800 -3.600 -5.600 0 -5.600S6.400 -3 7.700 .4C6.200 3.200 3.400 5.600 0 5.600S-6.400 3.400 -7.700 .4Z" fill="#b0b0b0"/><ellipse cx="0" cy=".9" rx="5" ry="3.300" fill="#fff"/><circle cx="0" cy="-1" r="3.100" fill="#b0b0b0"/><circle cx="-.9" cy="-1.500" r=".65" fill="#fff" fill-opacity=".8"/></g><path d="M144.4 259H157.4M150.9 252.5V265.5" stroke="#e00000" stroke-width="2.800" fill="none"/><path d="M144.4 260.2H157.4" stroke="#9a0000" stroke-width=".6" fill="none"/><path d="M204.6 259H216.6" stroke="#e00000" stroke-width="2.800" fill="none"/><path d="M204.6 260.3H216.6" stroke="#9a0000" stroke-width=".6" fill="none"/><g transform="translate(270.3,259) scale(1) rotate(40)"><path d="M-1.700 -8H1.700V5L0 8.500L-1.700 5Z" fill="#e8a93c" stroke="#8a5a14" stroke-width=".5"/><path d="M-1.700 -8H1.700V-6H-1.700Z" fill="#d43a2a"/><path d="M-1.700 5L0 8.500L1.700 5Z" fill="#f0d9b0" stroke="#8a5a14" stroke-width=".4"/><path d="M-.6 7.200L0 8.500L.6 7.200Z" fill="#222"/></g></svg>
<div class="list" style="top:272px;height:418px">
<div class="row" style="top:1px;"><i class="sw" style="background:#000;border-color:#000"></i><span class="nm" style="left:27.300px">0</span></div>
<div class="row" style="top:21px;"><i class="sw" style="background:#008080;border-color:#000"></i><span class="nm" style="left:27.300px">Bematingen</span></div>
<div class="row" style="top:41px;"><i class="sw" style="background:#f00;border-color:#000"></i><span class="nm" style="left:27.300px">Centrum</span></div>
<div class="row" style="top:61px;"><i class="sw" style="background:#fff;border-color:#000"></i><span class="nm" style="left:27.300px">Defpoints</span></div>
<div class="row" style="top:81px;"><i class="sw" style="background:#000;border-color:#000"></i><span class="nm" style="left:27.300px">Rand</span></div>
<div class="row" style="top:101px;background:#0a47d6;color:#fff;"><i class="sw" style="background:#e040fb;border-color:#555"></i><span class="nm" style="left:27.300px">Viewports</span></div>
<div class="row" style="top:121px;"><i class="sw" style="background:#000;border-color:#000"></i><span class="nm" style="left:27.300px">Zichtbaar</span></div>
<svg class="a" style="left:0;top:0" width="298.500" height="145" viewBox="0 0 298.500 145"><g transform="translate(267,10.7) scale(1)"><path d="M-7.700 .4C-6.600 -2.800 -3.600 -5.600 0 -5.600S6.400 -3 7.700 .4C6.200 3.200 3.400 5.600 0 5.600S-6.400 3.400 -7.700 .4Z" fill="#000"/><ellipse cx="0" cy=".9" rx="5" ry="3.300" fill="#fff"/><circle cx="0" cy="-1" r="3.100" fill="#000"/><circle cx="-.9" cy="-1.500" r=".65" fill="#fff" fill-opacity=".8"/></g><g transform="translate(288.8,11.2)"><path d="M-3.200 0V-3.300A3.200 3.200 0 0 1 3.200 -3.300V0" fill="none" stroke="#b6b6b6" stroke-width="1.300"/><rect x="-4.850" y="-.5" width="9.700" height="7" fill="#b6b6b6"/></g><g transform="translate(267,30.7) scale(1)"><path d="M-7.700 .4C-6.600 -2.800 -3.600 -5.600 0 -5.600S6.400 -3 7.700 .4C6.200 3.200 3.400 5.600 0 5.600S-6.400 3.400 -7.700 .4Z" fill="#000"/><ellipse cx="0" cy=".9" rx="5" ry="3.300" fill="#fff"/><circle cx="0" cy="-1" r="3.100" fill="#000"/><circle cx="-.9" cy="-1.500" r=".65" fill="#fff" fill-opacity=".8"/></g><g transform="translate(288.8,31.2)"><path d="M-3.200 0V-3.300A3.200 3.200 0 0 1 3.200 -3.300V0" fill="none" stroke="#b6b6b6" stroke-width="1.300"/><rect x="-4.850" y="-.5" width="9.700" height="7" fill="#b6b6b6"/></g><g transform="translate(267,50.7) scale(1)"><path d="M-7.700 .4C-6.600 -2.800 -3.600 -5.600 0 -5.600S6.400 -3 7.700 .4C6.200 3.200 3.400 5.600 0 5.600S-6.400 3.400 -7.700 .4Z" fill="#000"/><ellipse cx="0" cy=".9" rx="5" ry="3.300" fill="#fff"/><circle cx="0" cy="-1" r="3.100" fill="#000"/><circle cx="-.9" cy="-1.500" r=".65" fill="#fff" fill-opacity=".8"/></g><g transform="translate(288.8,51.2)"><path d="M-3.200 0V-3.300A3.200 3.200 0 0 1 3.200 -3.300V0" fill="none" stroke="#b6b6b6" stroke-width="1.300"/><rect x="-4.850" y="-.5" width="9.700" height="7" fill="#b6b6b6"/></g><g transform="translate(267,70.7) scale(1)"><path d="M-7.700 .4C-6.600 -2.800 -3.600 -5.600 0 -5.600S6.400 -3 7.700 .4C6.200 3.200 3.400 5.600 0 5.600S-6.400 3.400 -7.700 .4Z" fill="#000"/><ellipse cx="0" cy=".9" rx="5" ry="3.300" fill="#fff"/><circle cx="0" cy="-1" r="3.100" fill="#000"/><circle cx="-.9" cy="-1.500" r=".65" fill="#fff" fill-opacity=".8"/></g><g transform="translate(288.8,71.2)"><path d="M-3.200 0V-3.300A3.200 3.200 0 0 1 3.200 -3.300V0" fill="none" stroke="#b6b6b6" stroke-width="1.300"/><rect x="-4.850" y="-.5" width="9.700" height="7" fill="#b6b6b6"/></g><g transform="translate(267,90.7) scale(1)"><path d="M-7.700 .4C-6.600 -2.800 -3.600 -5.600 0 -5.600S6.400 -3 7.700 .4C6.200 3.200 3.400 5.600 0 5.600S-6.400 3.400 -7.700 .4Z" fill="#000"/><ellipse cx="0" cy=".9" rx="5" ry="3.300" fill="#fff"/><circle cx="0" cy="-1" r="3.100" fill="#000"/><circle cx="-.9" cy="-1.500" r=".65" fill="#fff" fill-opacity=".8"/></g><g transform="translate(288.8,91.2)"><path d="M-3.200 0V-3.300A3.200 3.200 0 0 1 3.200 -3.300V0" fill="none" stroke="#b6b6b6" stroke-width="1.300"/><rect x="-4.850" y="-.5" width="9.700" height="7" fill="#b6b6b6"/></g><g transform="translate(245,111.2) scale(0.9) rotate(40)"><path d="M-1.700 -8H1.700V5L0 8.500L-1.700 5Z" fill="#e8a93c" stroke="#8a5a14" stroke-width=".5"/><path d="M-1.700 -8H1.700V-6H-1.700Z" fill="#d43a2a"/><path d="M-1.700 5L0 8.500L1.700 5Z" fill="#f0d9b0" stroke="#8a5a14" stroke-width=".4"/><path d="M-.6 7.200L0 8.500L.6 7.200Z" fill="#222"/></g><g transform="translate(267,110.7) scale(1)"><path d="M-7.700 .4C-6.600 -2.800 -3.600 -5.600 0 -5.600S6.400 -3 7.700 .4C6.200 3.200 3.400 5.600 0 5.600S-6.400 3.400 -7.700 .4Z" fill="#18284e"/><ellipse cx="0" cy=".9" rx="5" ry="3.300" fill="#33477c"/><circle cx="0" cy="-1" r="3.100" fill="#18284e"/><circle cx="-.9" cy="-1.500" r=".65" fill="#fff" fill-opacity=".8"/></g><g transform="translate(288.8,111.2)"><path d="M-3.200 0V-3.300A3.200 3.200 0 0 1 3.200 -3.300V0" fill="none" stroke="#b8c6ea" stroke-width="1.300"/><rect x="-4.850" y="-.5" width="9.700" height="7" fill="#b8c6ea"/></g><g transform="translate(267,130.7) scale(1)"><path d="M-7.700 .4C-6.600 -2.800 -3.600 -5.600 0 -5.600S6.400 -3 7.700 .4C6.200 3.200 3.400 5.600 0 5.600S-6.400 3.400 -7.700 .4Z" fill="#000"/><ellipse cx="0" cy=".9" rx="5" ry="3.300" fill="#fff"/><circle cx="0" cy="-1" r="3.100" fill="#000"/><circle cx="-.9" cy="-1.500" r=".65" fill="#fff" fill-opacity=".8"/></g><g transform="translate(288.8,131.2)"><path d="M-3.200 0V-3.300A3.200 3.200 0 0 1 3.200 -3.300V0" fill="none" stroke="#b6b6b6" stroke-width="1.300"/><rect x="-4.850" y="-.5" width="9.700" height="7" fill="#b6b6b6"/></g></svg>
</div>
</div>
<div id="ricons" class="a">
<i class="a" style="left:8px;top:7.500px;width:26px;height:2px;background:repeating-linear-gradient(90deg,#9c9c9c 0 2px,transparent 2px 6px)"></i>
<div class="a" style="left:1.800px;top:11.6px;width:46px;height:42.300px;border-radius:5px;background:#bebebe"></div><svg class="a" style="left:8.800px;top:18.9px" width="28" height="28" viewBox="0 0 28 28"><rect x=".5" y=".5" width="27" height="27" fill="#fff" stroke="#000"/><rect x=".5" y=".5" width="27" height="3.800" fill="#000"/><rect x="1.200" y="1" width="2.800" height="2.600" fill="#fff"/><path d="M7 13l9 -3.500v10l-9 3.500Z" fill="#ddd" stroke="#555" stroke-width=".7"/><path d="M9.500 12l9 -3.500v10l-9 3.500Z" fill="#eee" stroke="#555" stroke-width=".7"/><path d="M11.500 19l4.500 -7.500v6Z" fill="none" stroke="#e33" stroke-width=".7"/></svg>
<div class="a" style="left:1.800px;top:58.9px;width:46px;height:42.300px;border-radius:5px;background:#bebebe"></div><svg class="a" style="left:8.800px;top:66.2px" width="28" height="28" viewBox="0 0 28 28"><rect x=".5" y=".5" width="27" height="27" fill="#fff" stroke="#000"/><rect x=".5" y=".5" width="27" height="3.800" fill="#000"/><rect x="1.200" y="1" width="2.800" height="2.600" fill="#fff"/><rect x="7" y="10.500" width="10.500" height="8" fill="#f6ebbd" stroke="#555" stroke-width=".7"/><circle cx="16" cy="17.500" r="4.500" fill="#f6ebbd" fill-opacity=".75" stroke="#555" stroke-width=".7"/></svg>
<svg class="a" style="left:8.800px;top:113.2px" width="28" height="28" viewBox="0 0 28 28"><rect x=".5" y=".5" width="27" height="27" fill="#fff" stroke="#000"/><rect x=".5" y=".5" width="27" height="3.800" fill="#000"/><rect x="1.200" y="1" width="2.800" height="2.600" fill="#fff"/><rect x="5.500" y="10.500" width="17" height="10" rx="2" fill="#f5f5f2" stroke="#c3d3ee" stroke-width="1"/></svg>
<i class="a" style="left:5px;top:153.600px;width:41px;height:1px;background:repeating-linear-gradient(90deg,#6a6a6a 0 1px,transparent 1px 4px)"></i>
<svg class="a" style="left:8.800px;top:169px" width="28" height="28" viewBox="0 0 28 28"><rect x=".5" y=".5" width="27" height="27" fill="#fff" stroke="#000"/><rect x=".5" y=".5" width="27" height="3.800" fill="#000"/><rect x="1.200" y="1" width="2.800" height="2.600" fill="#fff"/><rect x="3.600" y="8.0" width="3.600" height="2.800" fill="#000"/><rect x="10" y="8.0" width="14" height="2.800" fill="#fff" stroke="#333" stroke-width=".6"/><rect x="3.600" y="13.8" width="3.600" height="2.800" fill="#000"/><rect x="10" y="13.8" width="14" height="2.800" fill="#fff" stroke="#333" stroke-width=".6"/><rect x="3.600" y="19.6" width="3.600" height="2.800" fill="#000"/><rect x="10" y="19.6" width="14" height="2.800" fill="#fff" stroke="#333" stroke-width=".6"/></svg>
<svg class="a" style="left:8.800px;top:214.5px" width="28" height="28" viewBox="0 0 28 28"><rect x=".5" y=".5" width="27" height="27" fill="#fff" stroke="#000"/><rect x=".5" y=".5" width="27" height="3.800" fill="#000"/><rect x="1.200" y="1" width="2.800" height="2.600" fill="#fff"/><path d="M6.500 8.500h15l-5.800 6.500v7.500h-3.400v-7.500Z" fill="#9a9a9a" stroke="#555" stroke-width=".8"/><ellipse cx="14" cy="8.600" rx="7.500" ry="1.200" fill="#777" stroke="#555" stroke-width=".6"/></svg>
<svg class="a" style="left:8.800px;top:261px" width="28" height="28" viewBox="0 0 28 28"><rect x=".5" y=".5" width="27" height="27" fill="#fff" stroke="#000"/><rect x=".5" y=".5" width="27" height="3.800" fill="#000"/><rect x="1.200" y="1" width="2.800" height="2.600" fill="#fff"/><path d="M5.500 10l6 2.500v5.500l-6 2.500Z" fill="#fff" stroke="#333" stroke-width=".7"/><rect x="11.500" y="12" width="10" height="6.500" fill="#aaa" stroke="#555" stroke-width=".6"/><path d="M13 12v6.500M15 12v6.500M17 12v6.500M19 12v6.500" stroke="#666" stroke-width=".5"/><path d="M3.500 15.300H24.500" stroke="#f99" stroke-width=".6" stroke-dasharray="2 1"/></svg>
<i class="a" style="left:5px;top:301.800px;width:41px;height:1px;background:repeating-linear-gradient(90deg,#6a6a6a 0 1px,transparent 1px 4px)"></i>
<div class="a" style="left:1.800px;top:309.7px;width:46px;height:42.300px;border-radius:5px;background:#bebebe"></div><svg class="a" style="left:8.800px;top:317px" width="28" height="28" viewBox="0 0 28 28"><rect x=".5" y=".5" width="27" height="27" fill="#fff" stroke="#000"/><rect x=".5" y=".5" width="27" height="3.800" fill="#000"/><rect x="1.200" y="1" width="2.800" height="2.600" fill="#fff"/><rect x="3" y="8.0" width="14" height="1.300" fill="#888"/><rect x="3" y="11.4" width="11" height="1.300" fill="#888"/><rect x="3" y="14.8" width="13" height="1.300" fill="#888"/><rect x="3" y="18.2" width="15" height="1.300" fill="#888"/><path d="M.5 23H27.500" stroke="#000" stroke-width=".8"/><text x="3" y="27" font-size="3.600" fill="#333" font-family="Liberation Sans,sans-serif">c: command</text></svg>
<svg class="a" style="left:8.800px;top:364px" width="28" height="28" viewBox="0 0 28 28"><rect x=".5" y=".5" width="27" height="27" fill="#fff" stroke="#000"/><rect x=".5" y=".5" width="27" height="3.800" fill="#000"/><rect x="1.200" y="1" width="2.800" height="2.600" fill="#fff"/><rect x="7" y="8.500" width="14" height="16.500" rx="1" fill="#c98d3a" stroke="#8a5a14" stroke-width=".7"/><rect x="9" y="11" width="10" height="12" fill="#f4f4f4"/><rect x="11" y="7" width="6" height="3.500" rx=".8" fill="#999" stroke="#555" stroke-width=".5"/><path d="M10.500 14h7M10.500 16.500h7M10.500 19h5" stroke="#bbb" stroke-width=".7"/></svg>
</div>
<div id="status" class="a">
<span class="t" style="left:2px;top:9.500px">470,340</span>
<span class="t" style="left:2px;top:30px">@190.024,-230.4163</span>
<div class="a" style="left:253px;top:3px;width:1px;height:40px;background:#8a8a8a"></div>
<span class="t" style="left:256px;top:9.500px">580.0862&lt;36°</span>
<span class="t" style="left:256px;top:30px">@298.6651&lt;310°</span>
<div class="a" style="left:507px;top:21px;width:5px;height:5px;border-radius:3px;background:#cdcdcd"></div>
<span class="t" style="left:619px;top:19.500px">Tweede hoekpunt</span>
<svg class="a" style="left:716px;top:7px" width="20" height="31" viewBox="0 0 20 31"><rect x="1" y=".8" width="18" height="29.200" rx="8.500" fill="#fff" stroke="#333" stroke-width=".9"/><path d="M1 13.500H19M10 .8V4M10 9.500V13.500" stroke="#333" stroke-width=".8" fill="none"/><rect x="8.600" y="3.800" width="2.800" height="6" rx="1.400" fill="#fff" stroke="#333" stroke-width=".8"/></svg>
<span class="t" style="left:754px;top:19.500px">Annuleer</span>
<div class="a" style="left:940px;top:21px;width:5px;height:5px;border-radius:3px;background:#cdcdcd"></div>
<span class="t" style="left:949px;top:19.500px">Geen objecten geselecteerd.</span>
<div class="a" style="left:1270px;top:21px;width:5px;height:5px;border-radius:3px;background:#cdcdcd"></div>
</div>
</body></html>
